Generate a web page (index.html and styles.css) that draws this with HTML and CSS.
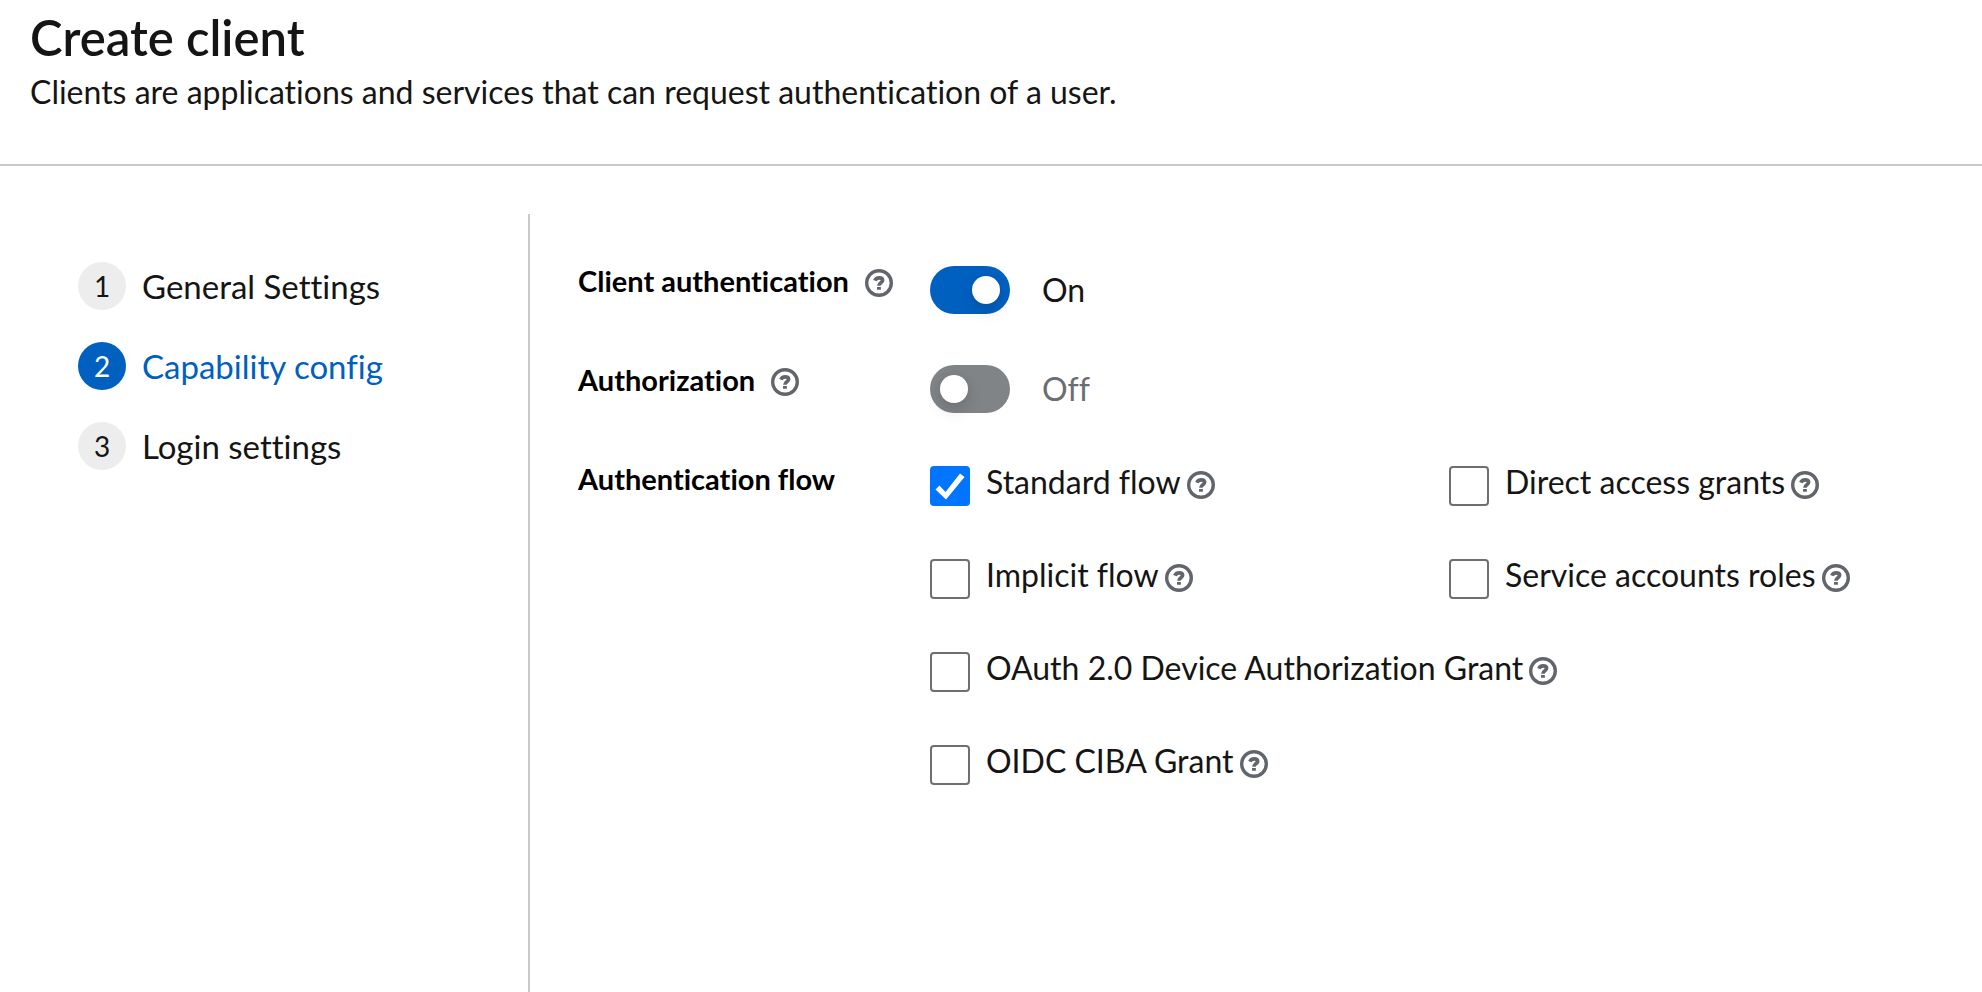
FILE: index.html
```html
<!DOCTYPE html>
<html lang="en">
<head>
<meta charset="utf-8">
<title>Create client</title>
<link rel="stylesheet" href="styles.css">
</head>
<body>
<!-- shared help icon -->
<svg class="defs" width="0" height="0" aria-hidden="true">
  <symbol id="help" viewBox="0 0 28 28">
    <circle cx="14" cy="14" r="12.3" fill="none" stroke="currentColor" stroke-width="3.4"/>
    <path d="M9.9 11.6C10.6 9.7 12.2 8.8 14.1 8.8C16.2 8.8 17.6 9.7 17.6 11.3C17.6 13.9 13.9 13.6 13.9 16.8" fill="none" stroke="currentColor" stroke-width="3.7"/>
    <rect x="12" y="17.9" width="3.9" height="2.9" rx=".4" fill="currentColor"/>
  </symbol>
</svg>
<header class="page-header">
  <h1>Create client</h1>
  <p>Clients are applications and services that can request authentication of a user.</p>
</header>
<main class="wizard">
  <nav class="steps">
    <ol>
      <li><a href="#general"><span class="num">1</span>General Settings</a></li>
      <li><a href="#capability" class="current" aria-current="step"><span class="num">2</span>Capability config</a></li>
      <li><a href="#login"><span class="num">3</span>Login settings</a></li>
    </ol>
  </nav>
  <form class="form">
    <div class="row">
      <div class="row-label">
        <label for="client-auth">Client authentication</label>
        <button type="button" class="help" aria-label="Help for client authentication"><svg><use href="#help"/></svg></button>
      </div>
      <div class="switch">
        <input type="checkbox" id="client-auth" checked>
        <label for="client-auth">On</label>
      </div>
    </div>
    <div class="row">
      <div class="row-label">
        <label for="authorization">Authorization</label>
        <button type="button" class="help" aria-label="Help for authorization"><svg><use href="#help"/></svg></button>
      </div>
      <div class="switch">
        <input type="checkbox" id="authorization">
        <label for="authorization">Off</label>
      </div>
    </div>
    <div class="row" role="group" aria-labelledby="flow-label">
      <div class="row-label" id="flow-label">Authentication flow</div>
      <div class="flows">
        <div class="check">
          <input type="checkbox" id="standard" checked>
          <label for="standard">Standard flow</label>
          <button type="button" class="help" aria-label="Help for standard flow"><svg><use href="#help"/></svg></button>
        </div>
        <div class="check">
          <input type="checkbox" id="direct">
          <label for="direct">Direct access grants</label>
          <button type="button" class="help" aria-label="Help for direct access grants"><svg><use href="#help"/></svg></button>
        </div>
        <div class="check">
          <input type="checkbox" id="implicit">
          <label for="implicit">Implicit flow</label>
          <button type="button" class="help" aria-label="Help for implicit flow"><svg><use href="#help"/></svg></button>
        </div>
        <div class="check">
          <input type="checkbox" id="service">
          <label for="service">Service accounts roles</label>
          <button type="button" class="help" aria-label="Help for service accounts roles"><svg><use href="#help"/></svg></button>
        </div>
        <div class="check wide">
          <input type="checkbox" id="device">
          <label for="device">OAuth 2.0 Device Authorization Grant</label>
          <button type="button" class="help" aria-label="Help for device grant"><svg><use href="#help"/></svg></button>
        </div>
        <div class="check wide">
          <input type="checkbox" id="ciba">
          <label for="ciba">OIDC CIBA Grant</label>
          <button type="button" class="help" aria-label="Help for CIBA grant"><svg><use href="#help"/></svg></button>
        </div>
      </div>
    </div>
  </form>
</main>
</body>
</html>
```
FILE: styles.css
```css
* {box-sizing: border-box;}
body {margin: 0;min-height: 100vh;display: flex;flex-direction: column;font-family: Lato, sans-serif;font-size: 32px;line-height: 48px;font-variant-ligatures: none;color: #151515;background-color: #fff;}
h1, p, ol {margin: 0;padding: 0;}
.defs {position: absolute;}

.page-header {padding: 6px 30px 48px;border-bottom: 2px solid #c9c9c9;}
h1 {font-size: 49px;line-height: 62px;font-weight: 600;}

.wizard {flex: 1;display: flex;margin-top: 48px;}
.steps {width: 530px;flex-shrink: 0;padding: 48px 32px 48px 78px;border-right: 2px solid #c9c9c9;}
.steps ol {list-style: none;display: flex;flex-direction: column;gap: 32px;font-size: 33px;}
.steps a {display: flex;gap: 16px;color: #151515;text-decoration: none;}
.steps .num {width: 48px;height: 48px;border-radius: 50%;background-color: #ededed;font-size: 28px;text-align: center;}
.steps .current {color: #0060c0;}
.steps .current .num {background-color: #0060c0;color: #fff;}

.form {flex: 1;display: flex;flex-direction: column;gap: 45px;padding: 46px 14px 48px 48px;}
.row {display: grid;grid-template-columns: 352px 1fr;}
.row-label {display: flex;align-items: flex-start;gap: 16px;font-size: 29px;line-height: 42px;font-weight: 700;color: #000;}
.row-label .help {margin-top: 9px;}

.help {width: 28px;height: 28px;flex-shrink: 0;padding: 0;border: none;background: none;color: #62666c;cursor: pointer;}
.help svg {display: block;width: 28px;height: 28px;}

.switch {display: flex;gap: 32px;margin-top: 6px;}
.switch input {appearance: none;width: 80px;height: 48px;margin: 0;padding: 10px;border-radius: 24px;background-color: #808487;cursor: pointer;}
.switch input::before {content: "";display: block;width: 28px;height: 28px;border-radius: 50%;background-color: #fff;box-shadow: 0 8px 16px rgba(3,3,3,.12), 0 0 8px rgba(3,3,3,.06);}
.switch input:checked {background-color: #0060c0;}
.switch input:checked::before {margin-left: 32px;}
.switch label {color: #6a6e73;}
.switch input:checked + label {color: #151515;}

.flows {display: grid;grid-template-columns: 1fr 1fr;row-gap: 45px;}
.check {display: flex;align-items: flex-start;}
.check.wide {grid-column: span 2;}
.check input {appearance: none;width: 40px;height: 40px;flex-shrink: 0;margin: 8px 16px 0 0;border: 2px solid #6f6f6f;border-radius: 4px;background-color: #fff;}
.check input:checked {border: none;background: #0075ff url("data:image/svg+xml,%3Csvg xmlns='http://www.w3.org/2000/svg' viewBox='0 0 40 40'%3E%3Cpath d='M5.5 23.5L9.5 19.5L15.5 26L30 7.5L34.5 11L16 33.5Z' fill='%23fff'/%3E%3C/svg%3E") center / 40px 40px no-repeat;}
.check .help {margin: 13px 0 0 6px;}
```
